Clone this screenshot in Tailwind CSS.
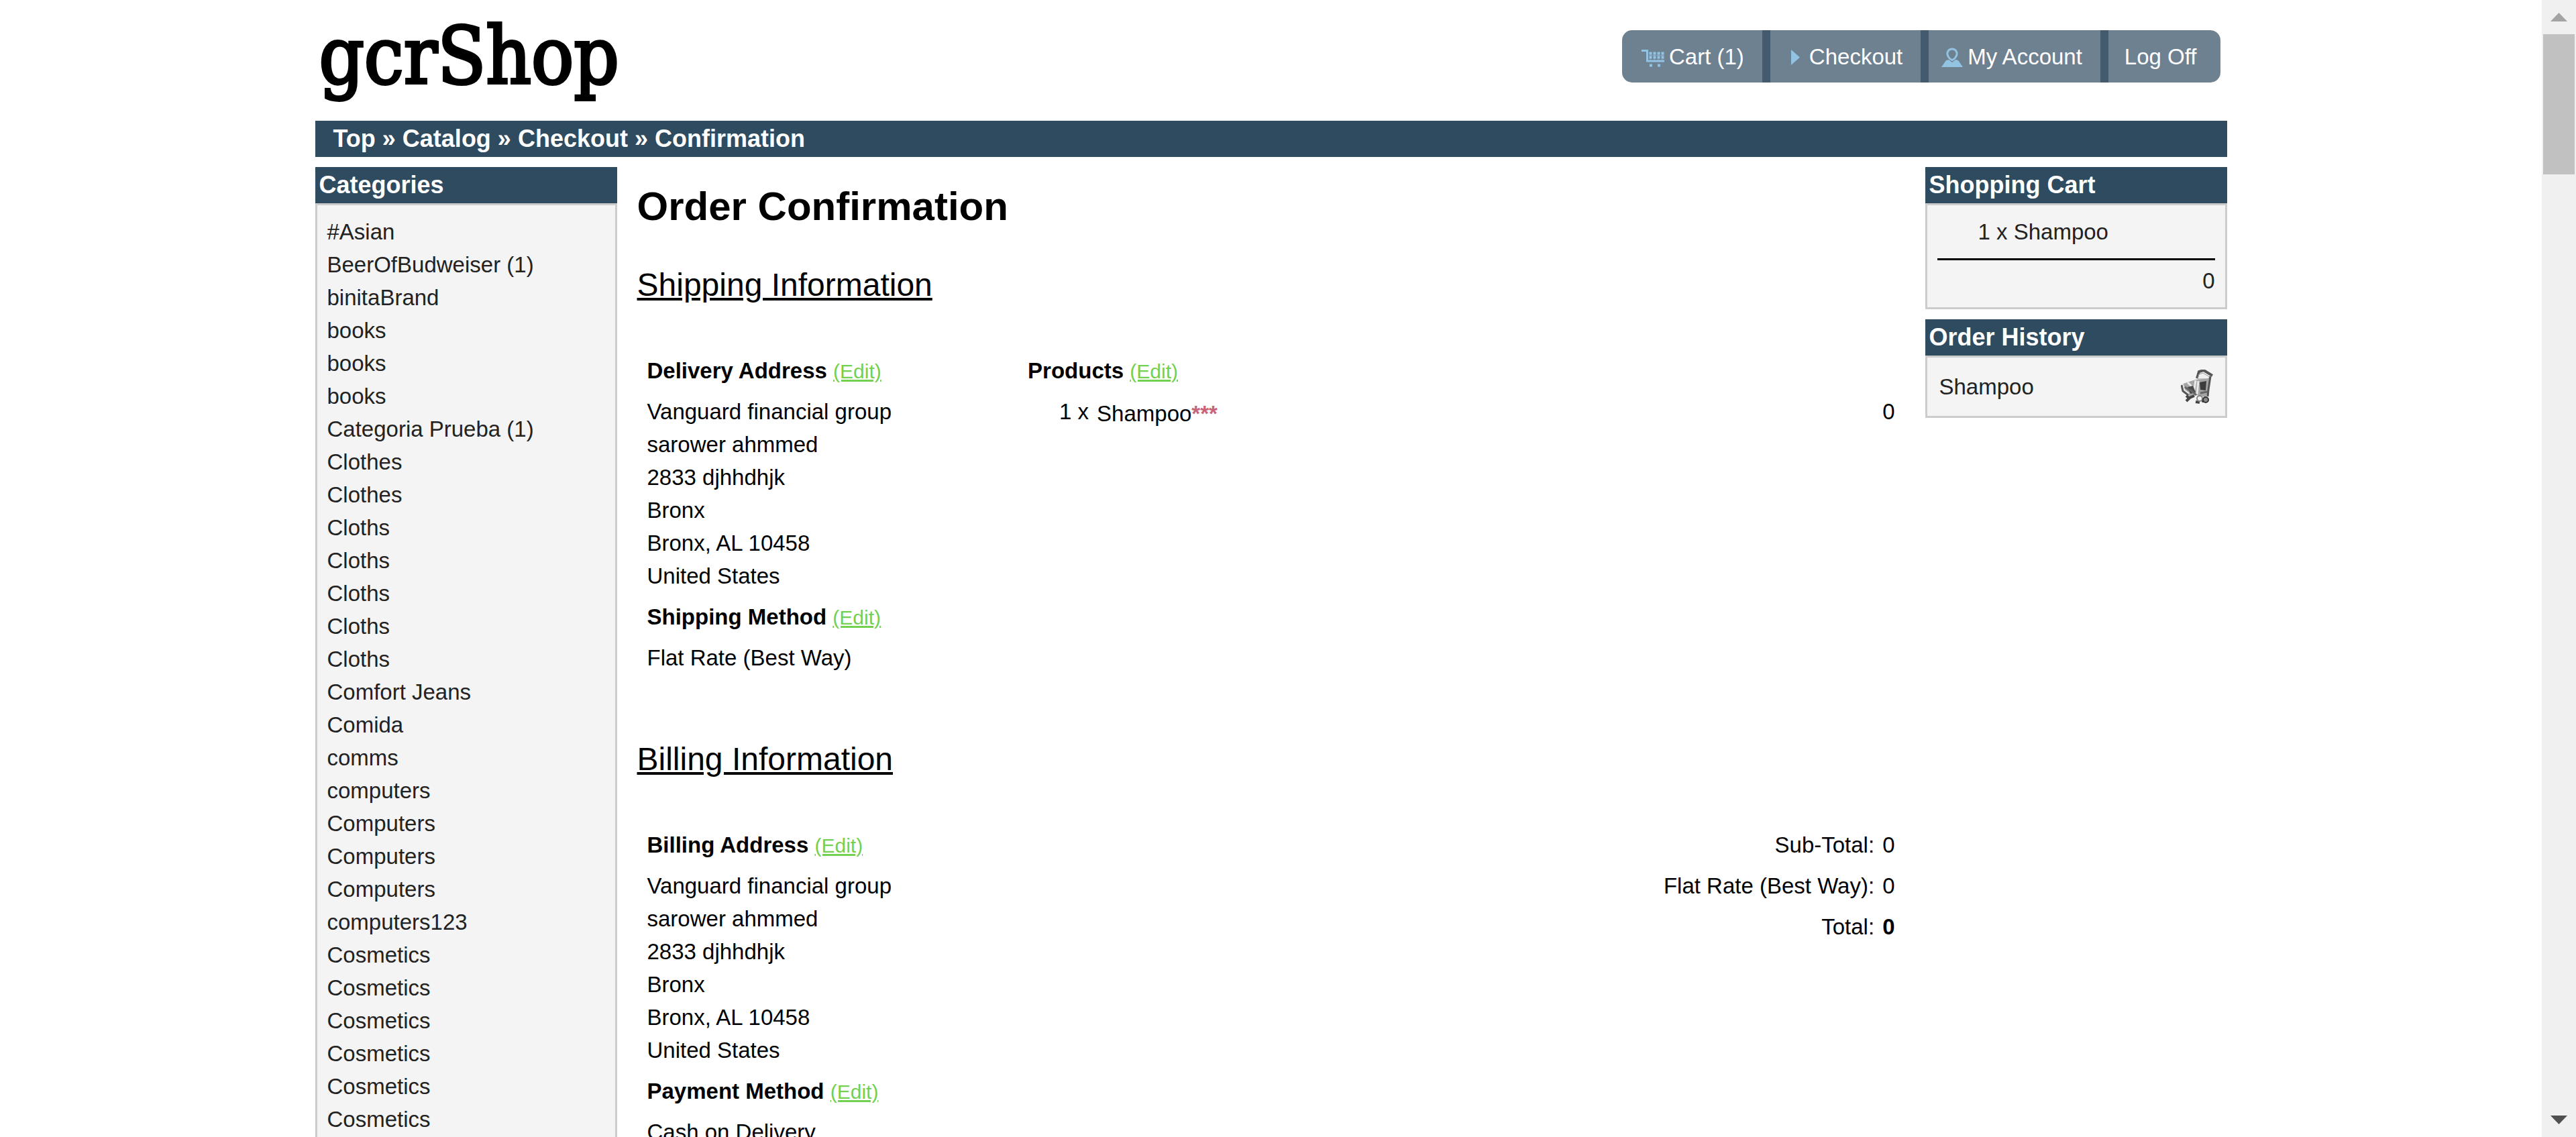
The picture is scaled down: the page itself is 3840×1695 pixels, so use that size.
<!DOCTYPE html>
<html lang="en">
<head>
<meta charset="utf-8">
<title>gcrShop - Order Confirmation</title>
<script src="https://cdn.jsdelivr.net/npm/@tailwindcss/browser@4"></script>
</head>
<body class="flex h-screen overflow-hidden bg-white font-['Liberation_Sans',Arial,sans-serif] text-[33px] leading-[49px] text-black">
<div class="h-full min-w-0 flex-1 overflow-hidden">
  <div class="mx-auto w-full max-w-[2850px]">

    <header class="flex h-[180px] items-start justify-between pl-[6px] pr-[10px]">
      <a href="#" class="pt-[12px] font-['DejaVu_Serif_Condensed','DejaVu_Serif',serif] text-[117px] leading-[144px] [-webkit-text-stroke:4px_black]">gcrShop</a>
      <nav class="mt-[45px] flex h-[78px] divide-x-[12px] divide-[#445a6f] overflow-hidden rounded-[15px] bg-[#6e8191] text-white">
        <a href="#" class="flex items-center pl-[22px] pr-[27px]">
          <svg class="size-[48px]" viewBox="0 0 48 48" fill="none" stroke="#93c3e3" aria-hidden="true">
            <path d="M7 15.500H15.500V31H41" stroke-width="3"/>
            <path d="M18.500 19.500H41M18.500 25.500H41" stroke-width="4" stroke-dasharray="4 2"/>
            <path d="M18.500 22.500H41M20 18V30M26 18V30M32 18V30M38 18V30" stroke-width="1" opacity=".6"/>
            <path d="M19 37.500h4M31 37.500h4" stroke-width="4"/>
          </svg>Cart (1)</a>
        <a href="#" class="flex items-center pl-[10px] pr-[27px]">
          <svg class="size-[48px]" viewBox="0 0 48 48" fill="#93c3e3" aria-hidden="true"><path d="M21 14L34 25.500L21 37Z"/></svg>Checkout</a>
        <a href="#" class="flex items-center pl-[10px] pr-[27px]">
          <svg class="size-[48px]" viewBox="0 0 48 48" aria-hidden="true">
            <path d="M25 13C20 13 17.500 17 18 21C18.500 25 22 28.500 25 29.500C28 28.500 31.500 25 32 21C32.500 17 30 13 25 13Z" fill="none" stroke="#93c3e3" stroke-width="3"/>
            <path d="M16 30L20 29L25 33L30 29L34 30L41 40H9Z" fill="#93c3e3"/>
          </svg>My Account</a>
        <a href="#" class="flex items-center pl-[24px] pr-[35px]">Log Off</a>
      </nav>
    </header>

    <nav class="flex h-[54px] items-center whitespace-pre bg-[#2f4b5f] pl-[27px] text-[36px] font-bold leading-[54px] text-white"><a href="#">Top</a> » <a href="#">Catalog</a> » <a href="#">Checkout</a> » <a href="#">Confirmation</a></nav>

    <div class="mt-[15px] flex items-start gap-[30px]">
      <aside class="w-[450px] shrink-0">
        <h2 class="bg-[#2f4b5f] px-[6px] text-[36px] font-bold leading-[54px] text-white">Categories</h2>
        <ul class="border-[3px] border-[#ccc] bg-[#f4f4f4] p-[15px] text-[#222]">
          <li><a href="#">#Asian</a></li>
          <li><a href="#">BeerOfBudweiser</a> (1)</li>
          <li><a href="#">binitaBrand</a></li>
          <li><a href="#">books</a></li>
          <li><a href="#">books</a></li>
          <li><a href="#">books</a></li>
          <li><a href="#">Categoria Prueba</a> (1)</li>
          <li><a href="#">Clothes</a></li>
          <li><a href="#">Clothes</a></li>
          <li><a href="#">Cloths</a></li>
          <li><a href="#">Cloths</a></li>
          <li><a href="#">Cloths</a></li>
          <li><a href="#">Cloths</a></li>
          <li><a href="#">Cloths</a></li>
          <li><a href="#">Comfort Jeans</a></li>
          <li><a href="#">Comida</a></li>
          <li><a href="#">comms</a></li>
          <li><a href="#">computers</a></li>
          <li><a href="#">Computers</a></li>
          <li><a href="#">Computers</a></li>
          <li><a href="#">Computers</a></li>
          <li><a href="#">computers123</a></li>
          <li><a href="#">Cosmetics</a></li>
          <li><a href="#">Cosmetics</a></li>
          <li><a href="#">Cosmetics</a></li>
          <li><a href="#">Cosmetics</a></li>
          <li><a href="#">Cosmetics</a></li>
          <li><a href="#">Cosmetics</a></li>
        </ul>
      </aside>

      <main class="min-w-0 flex-1">
        <h1 class="mt-[14px] text-[60px] font-bold leading-[90px]">Order Confirmation</h1>

        <h2 class="mt-[36px] text-[48px] leading-[72px] underline">Shipping Information</h2>
        <section class="mt-[61px] grid grid-cols-[30%_70%] px-[9px]">
          <div>
            <h3 class="p-[6px] font-bold">Delivery Address <a href="#" class="text-[30px] font-normal leading-[30px] text-[#72d14f] underline">(Edit)</a></h3>
            <address class="p-[6px] not-italic">Vanguard financial group<br>sarower ahmmed<br>2833 djhhdhjk<br>Bronx<br>Bronx, AL 10458<br>United States</address>
            <h3 class="p-[6px] font-bold">Shipping Method <a href="#" class="text-[30px] font-normal leading-[30px] text-[#72d14f] underline">(Edit)</a></h3>
            <p class="p-[6px]">Flat Rate (Best Way)</p>
          </div>
          <div class="pl-[6px]">
            <table class="w-full">
              <thead>
                <tr><th colspan="3" class="p-[6px] text-left font-bold">Products <a href="#" class="text-[30px] font-normal leading-[30px] text-[#72d14f] underline">(Edit)</a></th></tr>
              </thead>
              <tbody>
                <tr class="align-top">
                  <td class="w-[103px] p-[6px] text-right">1 x</td>
                  <td class="px-[6px] pt-[9px]">Shampoo<span class="font-bold text-[#c8647a]">***</span></td>
                  <td class="p-[6px] text-right">0</td>
                </tr>
              </tbody>
            </table>
          </div>
        </section>

        <h2 class="mt-[85px] text-[48px] leading-[72px] underline">Billing Information</h2>
        <section class="mt-[61px] grid grid-cols-[30%_70%] px-[9px]">
          <div>
            <h3 class="p-[6px] font-bold">Billing Address <a href="#" class="text-[30px] font-normal leading-[30px] text-[#72d14f] underline">(Edit)</a></h3>
            <address class="p-[6px] not-italic">Vanguard financial group<br>sarower ahmmed<br>2833 djhhdhjk<br>Bronx<br>Bronx, AL 10458<br>United States</address>
            <h3 class="p-[6px] font-bold">Payment Method <a href="#" class="text-[30px] font-normal leading-[30px] text-[#72d14f] underline">(Edit)</a></h3>
            <p class="p-[6px]">Cash on Delivery</p>
          </div>
          <table class="self-start justify-self-end text-right">
            <tbody>
              <tr><td class="p-[6px]">Sub-Total:</td><td class="p-[6px]">0</td></tr>
              <tr><td class="p-[6px]">Flat Rate (Best Way):</td><td class="p-[6px]">0</td></tr>
              <tr><td class="p-[6px]">Total:</td><td class="p-[6px] font-bold">0</td></tr>
            </tbody>
          </table>
        </section>
      </main>

      <aside class="flex w-[450px] shrink-0 flex-col gap-[15px] text-[#222]">
        <section>
          <h2 class="bg-[#2f4b5f] px-[6px] text-[36px] font-bold leading-[54px] text-white"><a href="#">Shopping Cart</a></h2>
          <div class="border-[3px] border-[#ccc] bg-[#f4f4f4] p-[15px]">
            <p class="pl-[61px]">1 x <a href="#">Shampoo</a></p>
            <p class="mt-[15px] border-t-[3px] border-black pt-[6px] text-right">0</p>
          </div>
        </section>
        <section>
          <h2 class="bg-[#2f4b5f] px-[6px] text-[36px] font-bold leading-[54px] text-white">Order History</h2>
          <div class="flex items-center justify-between border-[3px] border-[#ccc] bg-[#f4f4f4] px-[18px] py-[18px]">
            <a href="#">Shampoo</a>
            <a href="#" aria-label="Add to cart">
              <svg class="h-[51px] w-[48px]" viewBox="0 0 48 51" fill="none" aria-hidden="true">
                <path d="M24 13L27 3L34 1L47 9" stroke="#555" stroke-width="4"/>
                <path d="M27 7L33 5L43 11L40 14H25Z" fill="#eee" stroke="#999"/>
                <path d="M1 22L12 18L22 15L44 13L41 36L36 41L24 38L12 40L3 32Z" fill="#a5a5a5"/>
                <path d="M2 21L5 31L12 36M10 19L20 29L22 16M26 17L24 37" stroke="#e8e8e8" stroke-width="3"/>
                <path d="M1 23L3 32L11 38M44 10L41 30L40 40" stroke="#555" stroke-width="3"/>
                <path d="M28 19L38 17L37 31L29 30Z" fill="#3c3c3c"/>
                <path d="M10 26L18 24L22 34L14 36Z" fill="#4a4a4a"/>
                <path d="M29 35L39 33M14 30L23 38M6 26L13 31" stroke="#666" stroke-width="3"/>
                <path d="M8 39L14 44M8 47L13 42L20 39M22 48L28 49M27 39L33 47L40 45" stroke="#444" stroke-width="4"/>
                <circle cx="28" cy="43" r="4" fill="#f4f4f4" stroke="#888" stroke-width="2"/>
                <circle cx="37" cy="45" r="4" fill="#888" stroke="#333" stroke-width="2"/>
              </svg>
            </a>
          </div>
        </section>
      </aside>
    </div>
  </div>
</div>

<!-- scrollbar -->
<div class="flex h-full w-[51px] shrink-0 flex-col bg-[#f0f0f0]" aria-hidden="true">
  <div class="flex h-[51px] shrink-0 items-center justify-center"><svg class="h-[13px] w-[25px]" viewBox="0 0 25 13"><path d="M12.500 0L25 13H0Z" fill="#a3a3a3"/></svg></div>
  <div class="mx-[2px] h-[209px] bg-[#c1c1c1]"></div>
  <div class="mt-auto flex h-[51px] shrink-0 items-center justify-center"><svg class="h-[13px] w-[25px]" viewBox="0 0 25 13"><path d="M0 0H25L12.500 13Z" fill="#505050"/></svg></div>
</div>
</body>
</html>
